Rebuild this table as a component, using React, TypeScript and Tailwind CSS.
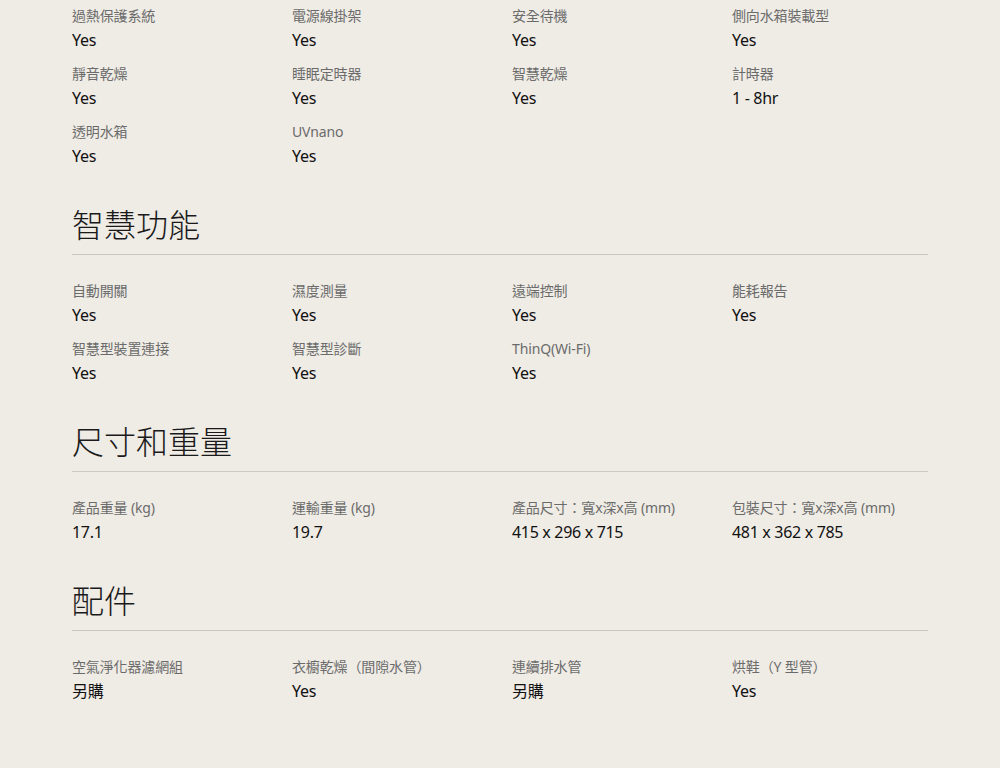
import React from 'react';

type Spec = { label: string; value: string };

const sections: { title?: string; items: Spec[] }[] = [
  {
    items: [
      { label: '過熱保護系統', value: 'Yes' },
      { label: '電源線掛架', value: 'Yes' },
      { label: '安全待機', value: 'Yes' },
      { label: '側向水箱裝載型', value: 'Yes' },
      { label: '靜音乾燥', value: 'Yes' },
      { label: '睡眠定時器', value: 'Yes' },
      { label: '智慧乾燥', value: 'Yes' },
      { label: '計時器', value: '1 - 8hr' },
      { label: '透明水箱', value: 'Yes' },
      { label: 'UVnano', value: 'Yes' },
    ],
  },
  {
    title: '智慧功能',
    items: [
      { label: '自動開關', value: 'Yes' },
      { label: '濕度測量', value: 'Yes' },
      { label: '遠端控制', value: 'Yes' },
      { label: '能耗報告', value: 'Yes' },
      { label: '智慧型裝置連接', value: 'Yes' },
      { label: '智慧型診斷', value: 'Yes' },
      { label: 'ThinQ(Wi-Fi)', value: 'Yes' },
    ],
  },
  {
    title: '尺寸和重量',
    items: [
      { label: '產品重量 (kg)', value: '17.1' },
      { label: '運輸重量 (kg)', value: '19.7' },
      { label: '產品尺寸：寬x深x高 (mm)', value: '415 x 296 x 715' },
      { label: '包裝尺寸：寬x深x高 (mm)', value: '481 x 362 x 785' },
    ],
  },
  {
    title: '配件',
    items: [
      { label: '空氣淨化器濾網組', value: '另購' },
      { label: '衣櫥乾燥（間隙水管）', value: 'Yes' },
      { label: '連續排水管', value: '另購' },
      { label: '烘鞋（Y 型管）', value: 'Yes' },
    ],
  },
];

const font = { fontFamily: '"Noto Sans", "Noto Sans CJK TC", sans-serif' };

function SpecGrid({ items }: { items: Spec[] }) {
  return (
    <div className="grid grid-cols-4 gap-x-6 gap-y-3">
      {items.map((it) => (
        <div key={it.label} className="flex flex-col">
          <span className="text-[14px] leading-5 tracking-[-0.01em] text-[#6b6b6b]">{it.label}</span>
          <span className="mt-[2px] text-[16px] leading-6 tracking-[-0.02em] text-[#111]">{it.value}</span>
        </div>
      ))}
    </div>
  );
}

export default function App() {
  return (
    <div className="min-h-[768px] bg-[#efebe5]" style={font}>
      <div className="mx-auto w-[856px] pt-[6px] pb-16">
        {sections.map((s, i) => (
          <section key={i} className={s.title ? 'mt-[37px]' : ''}>
            {s.title && (
              <div className="mb-[26px] border-b border-[#cbc7c1] pb-[9px]">
                <h2 className="text-[32px] font-light leading-10 text-[#1a1a1a]">{s.title}</h2>
              </div>
            )}
            <SpecGrid items={s.items} />
          </section>
        ))}
      </div>
    </div>
  );
}
